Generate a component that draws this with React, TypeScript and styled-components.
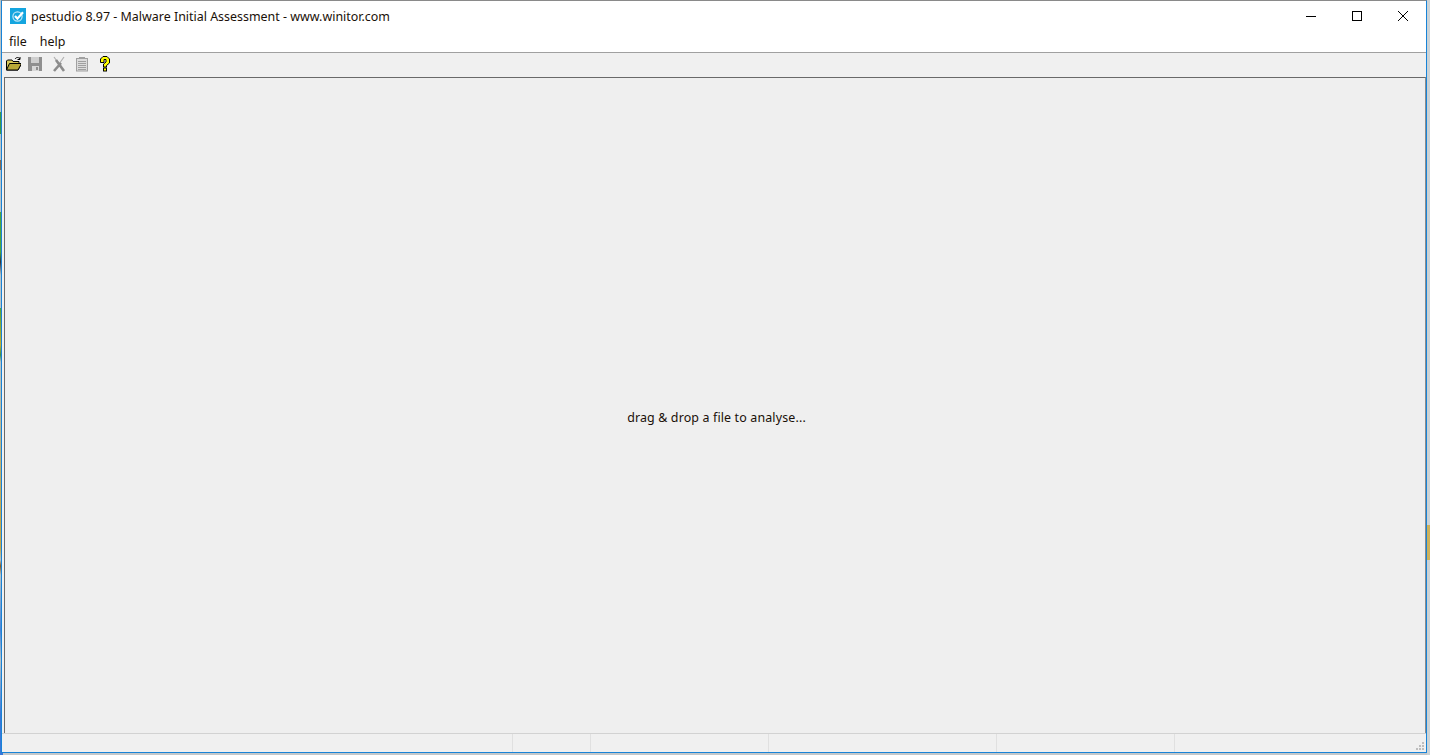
import React from 'react';
import styled, { createGlobalStyle } from 'styled-components';

const GlobalStyle = createGlobalStyle`
  html, body {
    margin: 0;
    padding: 0;
    overflow: hidden;
  }
`;

const Desktop = styled.div`
  box-sizing: border-box;
  width: 1430px;
  height: 755px;
  padding: 0 3px 2px 1px;
  display: flex;
  font-family: "Noto Sans", "Noto Sans CJK SC", sans-serif;
  font-size: 12.45px;
  color: #1a1008;
  background:
    linear-gradient(to bottom,
      #b9c4c8 0, #b9c4c8 112px, #3c9a46 112px, #3c9a46 134px, #b9c4c8 134px, #b9c4c8 160px,
      #8a6a50 160px, #8a6a50 170px, #b9c4c8 170px, #b9c4c8 212px, #4ea63e 212px, #4ea63e 252px,
      #30303a 262px, #b9c4c8 275px, #b9c4c8 308px, #55a53a 308px, #c8b030 345px, #3d8f4a 355px,
      #b9c4c8 362px, #c9a84a 515px, #c9a84a 548px, #b9c4c8 560px, #8a5a20 566px, #b9c4c8 575px,
      #4a86d8 630px, #b9c4c8 660px, #3a78d8 715px, #3a78d8 755px) left / 3px 100% no-repeat,
    linear-gradient(to bottom,
      #ccd3d6 0, #ccd3d6 525px, #cdb25c 525px, #cdb25c 560px, #ccd3d6 560px) right / 3px 100% no-repeat,
    #c4c8ca;
`;

const Window = styled.div`
  flex: 1;
  display: flex;
  flex-direction: column;
  border: 1px solid #1883d7;
  border-top-color: #8a8a8a;
  background: #f0f0f0;
`;

const TitleBar = styled.div`
  height: 30px;
  flex: none;
  display: flex;
  align-items: center;
  padding-left: 8px;
  background: #fff;
`;

const AppIcon = styled.svg`
  width: 16px;
  height: 16px;
  flex: none;
`;

const Title = styled.span`
  margin-left: 5px;
  flex: 1;
  white-space: nowrap;
`;

const CaptionButton = styled.div`
  width: 46px;
  height: 30px;
  display: flex;
  align-items: center;
  justify-content: center;
`;

const MenuBar = styled.div`
  height: 21px;
  flex: none;
  display: flex;
  align-items: center;
  gap: 13px;
  padding-left: 7px;
  background: #fff;
  border-bottom: 1px solid #a0a0a0;
`;

const ToolBar = styled.div`
  height: 24px;
  flex: none;
  display: flex;
  align-items: center;
  gap: 7px;
  padding: 0 0 2px 3px;
  box-sizing: border-box;
  background: #f0f0f0;
`;

const ToolIcon = styled.svg`
  width: 16px;
  height: 16px;
  flex: none;
`;

const MainPanel = styled.div`
  flex: 1;
  margin: 0 0 0 2px;
  display: flex;
  align-items: center;
  justify-content: center;
  background: #efefef;
  border-top: 1px solid #696969;
  border-left: 1px solid #696969;
  border-right: 1px solid #8c8c8c;
  padding: 24px 0 0 3px;
  letter-spacing: 0.14px;
`;

const StatusBar = styled.div`
  height: 18px;
  flex: none;
  display: flex;
  padding-left: 1px;
  background: #f0f0f0;
  border-top: 1px solid #d2d2d2;
`;

const StatusCell = styled.div<{ $width?: number }>`
  box-sizing: border-box;
  width: ${(p) => (p.$width ? `${p.$width}px` : 'auto')};
  flex: ${(p) => (p.$width ? 'none' : '1')};
  border-right: ${(p) => (p.$width ? '1px solid #e0e0e0' : 'none')};
  position: relative;
`;

const Grip = styled.svg`
  position: absolute;
  right: 1px;
  bottom: 1px;
  width: 10px;
  height: 10px;
`;

const App: React.FC = () => {
  return (
    <>
      <GlobalStyle />
      <Desktop>
        <Window>
          <TitleBar>
            <AppIcon viewBox="0 0 16 16">
              <rect width="16" height="16" fill="#14a5df" />
              <circle cx="7.5" cy="8.5" r="4.6" fill="none" stroke="#bfe6f6" strokeWidth="1.2" />
              <path d="M5 8l2.4 2.6L13 4.2" fill="none" stroke="#fff" strokeWidth="2.2" />
            </AppIcon>
            <Title>pestudio 8.97 - Malware Initial Assessment - www.winitor.com</Title>
            <CaptionButton>
              <svg width="12" height="12" viewBox="0 0 12 12">
                <path d="M1 6.5h10" stroke="#000" strokeWidth="1" />
              </svg>
            </CaptionButton>
            <CaptionButton>
              <svg width="12" height="12" viewBox="0 0 12 12">
                <rect x="1.5" y="1.5" width="9" height="9" fill="none" stroke="#000" strokeWidth="1" />
              </svg>
            </CaptionButton>
            <CaptionButton>
              <svg width="12" height="12" viewBox="0 0 12 12">
                <path d="M1 1l10 10M11 1L1 11" stroke="#000" strokeWidth="1" />
              </svg>
            </CaptionButton>
          </TitleBar>
          <MenuBar>
            <span>file</span>
            <span>help</span>
          </MenuBar>
          <ToolBar>
            <ToolIcon viewBox="-1 0 16 16">
              <path d="M0.5 5V14H12L15.5 7.5H13V5.5H7L6 4H1.5z" fill="#d8c858" stroke="#000" strokeWidth="1" />
              <path d="M3.5 7.5h12L12 14H0.5z" fill="#b8a838" stroke="#000" strokeWidth="1" />
              <path d="M9 3c1.5-2 3.5-2 5 0M14 1v2.5h-2.5" fill="none" stroke="#000" strokeWidth="1" />
            </ToolIcon>
            <ToolIcon viewBox="1 0 16 16">
              <path d="M1 1h14v14H1z" fill="#8f8f8f" />
              <rect x="4" y="1" width="8" height="6" fill="#cfcfcf" />
              <rect x="5" y="10" width="7" height="5" fill="#d8d8d8" />
              <rect x="9" y="11" width="2" height="3" fill="#8f8f8f" />
            </ToolIcon>
            <ToolIcon viewBox="0 0 16 16">
              <path d="M3 1l5 7M13 1L8 8" stroke="#b0b0b0" strokeWidth="1.2" fill="none" />
              <path d="M5 4l8 11M10 7l-7 8" stroke="#8c8c8c" strokeWidth="2.6" fill="none" />
            </ToolIcon>
            <ToolIcon viewBox="0 0 16 16">
              <rect x="2.5" y="2.5" width="11" height="12.5" fill="#dcdcdc" stroke="#a0a0a0" />
              <rect x="5" y="1" width="6" height="2" fill="#a0a0a0" />
              <path d="M4 5.5h8M4 7.5h8M4 9.5h8M4 11.5h8M4 13.5h8" stroke="#a0a0a0" strokeWidth="1" />
            </ToolIcon>
            <ToolIcon viewBox="0 0 16 16">
              <path
                d="M3.5 6.5V3L6 0.5H10L12.5 3V7L9.5 9.5V11H6.5V8L9 6V3.5H7V6.5z"
                fill="#ffff00"
                stroke="#000"
                strokeWidth="1"
              />
              <rect x="6.5" y="12" width="3" height="3" fill="#ffff00" stroke="#000" strokeWidth="1" />
            </ToolIcon>
          </ToolBar>
          <MainPanel>drag &amp; drop a file to analyse...</MainPanel>
          <StatusBar>
            <StatusCell $width={510} />
            <StatusCell $width={78} />
            <StatusCell $width={178} />
            <StatusCell $width={228} />
            <StatusCell $width={178} />
            <StatusCell>
              <Grip viewBox="0 0 10 10">
                <path d="M7 1h2v2H7zM4 4h2v2H4zM7 4h2v2H7zM1 7h2v2H1zM4 7h2v2H4zM7 7h2v2H7z" fill="#bdbdbd" />
              </Grip>
            </StatusCell>
          </StatusBar>
        </Window>
      </Desktop>
    </>
  );
};

export default App;
